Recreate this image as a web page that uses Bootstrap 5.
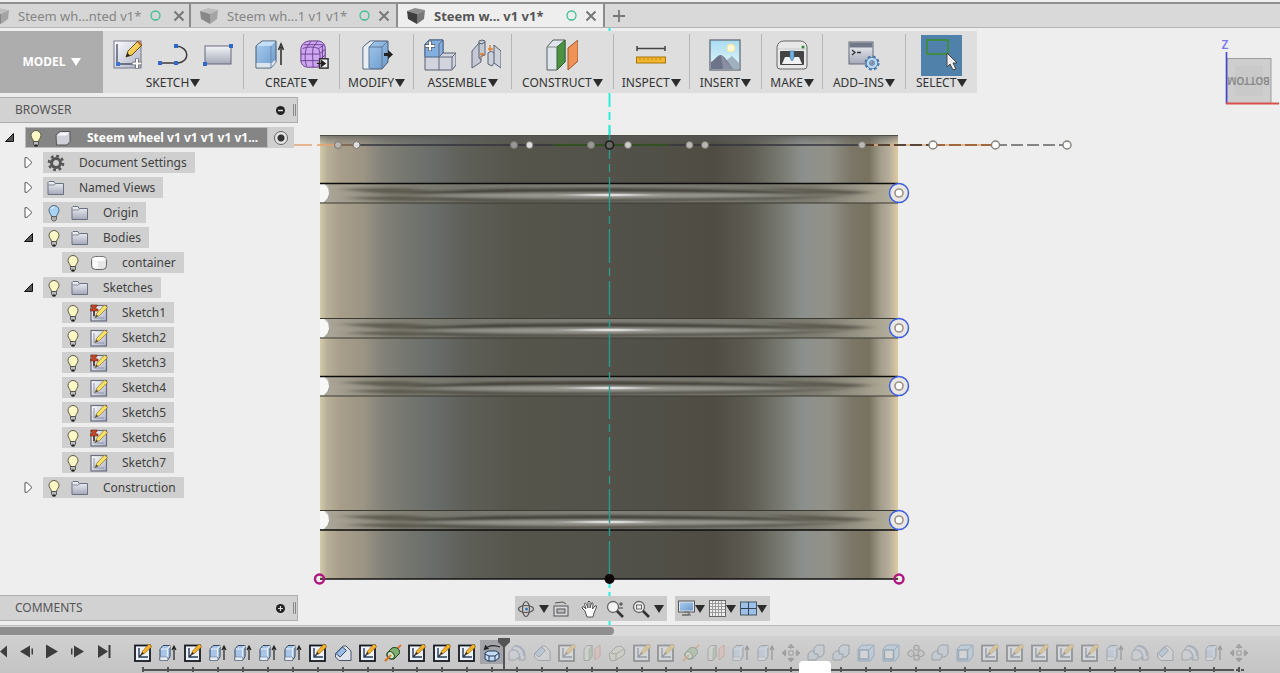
<!DOCTYPE html>
<html lang="en">
<head>
<meta charset="utf-8">
<meta name="viewport" content="width=device-width, initial-scale=1">
<title>Steem wheel v1</title>
<link href="https://cdn.jsdelivr.net/npm/bootstrap@5.3.0/dist/css/bootstrap.min.css" rel="stylesheet">
<style>
body{font-family:"Noto Sans","Open Sans",sans-serif;font-size:12px;line-height:16px;color:#3f3f3f;background:#eee}
button{font:inherit;color:inherit;border:0;background:none;padding:0}
svg{display:block;flex:none}
.doc-tabs{background:#d9d9d9;height:26px;border-top:2px solid #8f8f8f;border-bottom:1px solid #b4b4b4;margin-top:2px;overflow:hidden}
.doc-tab{width:207px;border-right:2px solid #8c8c8c;color:#858585;font-size:13px;background:#d6d6d6}
.doc-tab:first-child{width:191px}
.doc-tab.current{background:#eee;color:#555;font-weight:700}
.doc-tab .doc-name{width:128px}
.doc-tab:first-child .doc-name{width:132px}
.stage{min-height:400px}
.scene{inset:0}
.tool-row{margin-top:3px;height:62px;background:#dedede;width:max-content}
.model-btn{width:103px;background:#adadad;color:#fff;font-weight:700}
.tool-group{padding:6px 10px 0;position:relative}
.tool-group.tight{padding-left:8px;padding-right:8px}
.tool-group+.tool-group{border-left:1px solid #b9b9b9;border-image:linear-gradient(transparent 4px,#b5b5b5 4px,#b5b5b5 57px,transparent 57px) 1}
.tool-icons{gap:15px;height:36px}
.pick{background:#4f81ab;width:41px;height:41px;margin-top:-2px}
.tool-label{color:#333;line-height:20px}
.arrow-dn{display:inline-block;border:5px solid transparent;border-top:8px solid #2c2c2c;border-bottom:0;margin-left:1px}
.white-arrow{border-top-color:#fff;margin-left:5px}
.side-panel{width:298px;height:26px;background:#d2d2d2;border:1px solid #aeaeae;border-left:0;padding:0 1px 0 15px;color:#555}
.grip{width:3px;height:12px;border:1px solid #888;border-width:0 1px}
.tree{list-style:none;margin:4px 0 0;padding:0}
.tree li{height:25px}
.tree-item{height:21px;background:#cfcfcf;padding:0 8px 0 4px}
.twist{width:43px;height:21px;padding-left:24px}
.root-twist{width:25px;height:21px;padding-left:5px}
.leaf-in{width:62px}
.g-a{gap:10px}
.root-item{background:#858585;color:#fff;font-weight:700;width:243px;border:1px solid #bbb;padding:0 3px}
.root-radio{width:26px;height:21px;background:#cfcfcf}
.root-radio input{appearance:none;width:14px;height:14px;border-radius:50%;border:1px solid #666;margin:0;background:radial-gradient(circle,#333 0 3px,#e4e4e4 4px)}
.nav-strip{height:25px;background:#cbcbcb;padding:0 3px}
.low-row{display:grid;grid-template-columns:298px 1fr 294px;margin-bottom:4px}
.nav-strip .arrow-dn{margin:0}
.h-scroll{height:11px;background:#dadada;border-top:1px solid #bcbcbc;padding-top:1px}
.h-thumb{width:48%;height:8px;background:#8e8e8e;border-radius:0 4px 4px 0}
.time-row{height:37px;background:linear-gradient(#d0d0d0,#c4c4c4)}
.play-keys{width:131px}
.track{margin-right:28px;padding-top:4px}
.step{flex:1 1 0;height:29px}
.step svg{margin:4px auto 0}
.step::after{content:"";display:block;width:2px;height:5px;background:#555;margin:5px auto 0}
.step.later svg{opacity:.3}
.step.now{background:linear-gradient(#a3a4a8 24px,transparent 24px)}
.rail{left:12px;right:8px;bottom:2px;height:2px;background:linear-gradient(90deg,#555 calc(100% - 10px),transparent calc(100% - 10px),transparent calc(100% - 8px),#555 calc(100% - 8px),#555 calc(100% - 5px),transparent calc(100% - 5px),transparent calc(100% - 3px),#555 calc(100% - 3px))}
.marker{left:33.3%;margin-left:-7px;top:2px}
.note-tab{left:59.6%;bottom:0;width:32px;height:12px;background:#fff;border-radius:4px 4px 0 0}
</style>
</head>
<body class="d-flex flex-column min-vh-100 overflow-hidden">

<svg width="0" height="0" class="position-absolute" aria-hidden="true">
<defs>
<linearGradient id="gFold" x2="0" y2="1"><stop stop-color="#f4f5f9"/><stop offset="1" stop-color="#a4a8b8"/></linearGradient>
<linearGradient id="gDiag" x2="1" y2="1"><stop stop-color="#fff"/><stop offset="1" stop-color="#aab0c6"/></linearGradient>
<linearGradient id="gBlue" x2="1" y2="1"><stop stop-color="#a9cdf0"/><stop offset="1" stop-color="#6c9acb"/></linearGradient>
<linearGradient id="gPen" x2="1" y2="1"><stop stop-color="#fff29a"/><stop offset="1" stop-color="#e9a91c"/></linearGradient>
<linearGradient id="gSky" x2="0" y2="1"><stop stop-color="#a8dcf2"/><stop offset="1" stop-color="#e6f7fb"/></linearGradient>
<symbol id="bulb" viewBox="0 0 14 18"><path d="M7 1.500a5 5 0 0 1 5 5c0 2-2 3.500-2.500 6h-5C4 10 2 8.500 2 6.500a5 5 0 0 1 5-5z" fill="#fdf8c4" stroke="#5d5a40"/><path d="M4.500 5a3 3 0 0 1 2.500-2" stroke="#fff" fill="none"/><path d="M4.500 12.500h5v3l-1.500 1.500h-2l-1.500-1.500z" fill="#bbb" stroke="#444" stroke-width=".8"/><path d="M5.500 16.500h3" stroke="#222" stroke-width="2"/></symbol>
<symbol id="bulbB" viewBox="0 0 14 18"><path d="M7 1.500a5 5 0 0 1 5 5c0 2-2 3.500-2.500 6h-5C4 10 2 8.500 2 6.500a5 5 0 0 1 5-5z" fill="#a9d2f3" stroke="#4d6884"/><path d="M4.500 5a3 3 0 0 1 2.500-2" stroke="#fff" fill="none"/><path d="M4.500 12.500h5v3l-1.500 1.500h-2l-1.500-1.500z" fill="#aaa" stroke="#555" stroke-width=".8"/></symbol>
<symbol id="folder" viewBox="0 0 18 16"><path d="M1 14.500v-12l1-1h5l1 2h8.500v11z" fill="url(#gFold)" stroke="#697080"/><path d="M1.500 5h6l1-1.500" stroke="#858b99" fill="none"/></symbol>
<symbol id="gear" viewBox="0 0 18 18"><circle cx="9" cy="9" r="4.500" fill="none" stroke="#555" stroke-width="3"/><circle cx="9" cy="9" r="7" fill="none" stroke="#555" stroke-width="2.600" stroke-dasharray="2.800 2.700"/></symbol>
<symbol id="cyl" viewBox="0 0 18 16"><rect x="1.500" y="1.500" width="15" height="13" rx="4" fill="#e6e6e6" stroke="#666"/><ellipse cx="9" cy="4" rx="7" ry="2.200" fill="#fff"/><path d="M3 6v7h5v-6z" fill="#fafafa"/></symbol>
<symbol id="cube" viewBox="0 0 16 16"><path d="M1 5l4-3.500h10v10l-3 3.500H1.500z" fill="#cfd0da" stroke="#555"/><path d="M2 5.500l3.500-3h8.500l-2.500 3z" fill="#f5f5fa"/></symbol>
<symbol id="skS" viewBox="0 0 18 18"><rect x="1" y="1.500" width="15.500" height="15.500" fill="url(#gDiag)" stroke="#686c7c" stroke-width="1.200"/><path d="M4 4v10h10" fill="none" stroke="#8d93ac"/><path d="M5 13.500l2-4.500L14.500 1 17.500 3.500 9.500 11.500z" fill="#fbe163" stroke="#8d7428" stroke-width=".7"/><path d="M5 13.500l1.500-3 1.500 1.700z" fill="#444"/></symbol>
<symbol id="pin" viewBox="0 0 18 18"><use href="#skS"/><path d="M1 1h6v1.500H6V5h2v2H0V5h2V2.500H1z" fill="#c24a28" stroke="#73230e" stroke-width=".6"/><path d="M4 7v5" stroke="#3a2020" stroke-width="1.500"/></symbol>
<symbol id="sketch" viewBox="0 0 18 18"><rect x="1" y="1.500" width="15" height="15.500" fill="#edf2fc" stroke="#151a22" stroke-width="1.800"/><path d="M5 4v9h9M5 13l3-3" fill="none" stroke="#263b58" stroke-width="1.400"/><path d="M7 11l1.500-4L15 0l3 2.500-7.500 7z" fill="#f3b329" stroke="#8d5b12" stroke-width=".6"/><path d="M7 11l1.200-3 1.700 1.500z" fill="#222"/></symbol>
<symbol id="extrude" viewBox="0 0 18 18"><path d="M1 5l3-3.500h7v11L8.500 16.500H1z" fill="#a8c5e8" stroke="#33465e"/><path d="M1.500 5h7l2.500-3M8.500 5v11" fill="none" stroke="#e4effa" stroke-width="1.200"/><path d="M1 13h7.500V16.500H1z" fill="#e9edf3" stroke="#56677e" stroke-width=".5"/><path d="M15 16V3M13 6l2-4 2 4" fill="none" stroke="#222" stroke-width="1.200"/></symbol>
<symbol id="chamfer" viewBox="0 0 18 18"><path d="M1.500 9.500L9 2h3l5 5v9.500H5L1.500 13z" fill="#e0e3ea" stroke="#46536b"/><path d="M2 9.500L8.500 3l4 3.500L6 13z" fill="#9cbde8" stroke="#3b506d"/></symbol>
<symbol id="fillet" viewBox="0 0 18 18"><path d="M1 9L6 2c6-1 10 2 11 8v6h-6v-3L7 16H1z" fill="#cfd6e2" stroke="#4b5261"/><path d="M4 6c5-1 8 3 8 9M7 2c6 0 9 5 9 10" fill="none" stroke="#4b6c9c" stroke-width="1.400"/></symbol>
<symbol id="revolve" viewBox="0 0 18 18"><path d="M1 17L17 1" stroke="#e0762e" stroke-width="1.800"/><path d="M3 9l5-5c5-2 9 2 7 6l-5 5c-5 1-8-2-7-6z" fill="#7eb06f" stroke="#24421f"/><ellipse cx="6.800" cy="11.200" rx="3" ry="4" transform="rotate(-45 6.800 11.200)" fill="#d4e8cb" stroke="#28502a"/><path d="M1 17l6-6" stroke="#e0762e" stroke-width="1.800"/></symbol>
<symbol id="rbox" viewBox="0 0 18 18"><path d="M1 10l7-7 5-1 4 4-1 5-8 5-5 1z" fill="#d5d8bd" stroke="#555"/><path d="M3 9l5 1v6M8 10l8-5" stroke="#555" fill="none"/></symbol>
<symbol id="plane" viewBox="0 0 18 18"><path d="M1 5l3-3.500h5v11L6 16.500H1z" fill="#d4e4d2" stroke="#555"/><path d="M6 5l3-3.500v11L6 16z" fill="#8ab784" stroke="#555" stroke-width=".6"/><path d="M12 5l5-4v11l-5 4z" fill="#f0b3a4" stroke="#b06050"/></symbol>
<symbol id="move" viewBox="0 0 18 18"><rect x="7" y="7" width="4" height="4" fill="#ddd" stroke="#333"/><path d="M9 0l3 3.500H6zM9 18l3-3.500H6zM0 9l3.500-3v6zM18 9l-3.500-3v6zM9 3v2M9 13v2M3 9h2M13 9h2" fill="#444" stroke="#444"/></symbol>
<symbol id="combine" viewBox="0 0 18 18"><path d="M1 10l3-3h3V4l3-3h7v9l-3 3h-3l-2 3H1z" fill="#b9cce2" stroke="#34445c"/><path d="M7 7v3h4v3" fill="none" stroke="#34445c"/></symbol>
<symbol id="shell" viewBox="0 0 18 18"><path d="M1 5l4-4h12v11l-4 5H1z" fill="#a8cbea" stroke="#285f94"/><rect x="2.500" y="6" width="9" height="9" fill="#eee" stroke="#285f94" stroke-width="1.500"/><path d="M12 6l4-4" stroke="#285f94"/></symbol>
<symbol id="pattern" viewBox="0 0 18 18"><path d="M9 1l3 1v4H7V2zM4 6l3 2v3L4 13 1 11V8zM14 6l3 2v3l-3 2-3-2V8zM9 11l3 1v4H7v-4z" fill="#b8bcc5" stroke="#333"/></symbol>
<symbol id="loop" viewBox="0 0 18 18"><path d="M2 9l3-2h8l3 2v5l-4 3H5l-3-2z" fill="#c4dcf4" stroke="#243b5b"/><path d="M2 10l4 2h6l4-3M6 12v5M12 12v5" fill="none" stroke="#243b5b"/><path d="M2 5c4-4 10-4 15-2M1.500 5.500l1-3.500 2.500 2.500z" fill="none" stroke="#222" stroke-width="1.200"/></symbol>
<symbol id="tcube" viewBox="0 0 20 18"><path d="M1 4l8-3 10 2-8 4z" fill="#bdbdbd"/><path d="M1 4l10 3v10L2 12z" fill="#888"/><path d="M11 7l8-4-1 9-7 5z" fill="#a4a4a4"/></symbol>
<symbol id="tcubeD" viewBox="0 0 20 18"><path d="M1 4l8-3 10 2-8 4z" fill="#8d8d8d"/><path d="M1 4l10 3v10L2 12z" fill="#3e3e3e"/><path d="M11 7l8-4-1 9-7 5z" fill="#777"/></symbol>
<symbol id="cross" viewBox="0 0 12 12"><path d="M1.500 1.500l9 9M10.500 1.500l-9 9" stroke="#777" stroke-width="2"/></symbol>
</defs>
</svg>

<nav class="doc-tabs d-flex flex-shrink-0" aria-label="Documents">
  <div class="doc-tab d-flex align-items-center flex-shrink-0"><svg class="ms-n2" width="10" height="18" viewBox="10 0 10 18" aria-hidden="true"><use href="#tcube" width="20" height="18"/></svg><a href="#" class="doc-name text-reset text-decoration-none ps-2 ms-0 text-nowrap">Steem wh...nted v1*</a><svg class="ms-2 me-2" width="11" height="11" viewBox="0 0 11 11"><circle cx="5.500" cy="5.500" r="4.500" fill="none" stroke="#3fbf90" stroke-width="1.300"/></svg><button class="ms-1" aria-label="Close"><svg width="12" height="12"><use href="#cross"/></svg></button></div>
  <div class="doc-tab d-flex align-items-center flex-shrink-0"><svg class="ms-2" width="20" height="18"><use href="#tcube"/></svg><a href="#" class="doc-name text-reset text-decoration-none ms-2 text-nowrap">Steem wh...1 v1 v1*</a><svg class="ms-1 me-2" width="11" height="11" viewBox="0 0 11 11"><circle cx="5.500" cy="5.500" r="4.500" fill="none" stroke="#3fbf90" stroke-width="1.300"/></svg><button aria-label="Close"><svg width="12" height="12"><use href="#cross"/></svg></button></div>
  <div class="doc-tab current d-flex align-items-center flex-shrink-0"><svg class="ms-2" width="20" height="18"><use href="#tcubeD"/></svg><a href="#" class="doc-name text-reset text-decoration-none ms-2 text-nowrap">Steem w... v1 v1*</a><svg class="ms-1 me-2" width="11" height="11" viewBox="0 0 11 11"><circle cx="5.500" cy="5.500" r="4.500" fill="none" stroke="#3fbf90" stroke-width="1.300"/></svg><button aria-label="Close"><svg width="12" height="12"><use href="#cross"/></svg></button></div>
  <button class="ms-2" aria-label="New tab"><svg width="12" height="12" viewBox="0 0 12 12"><path d="M6 0v12M0 6h12" stroke="#777" stroke-width="1.800"/></svg></button>
</nav>

<main class="stage position-relative flex-grow-1 d-flex flex-column">
  <svg class="scene position-absolute w-100 h-100" viewBox="0 28 1280 597" role="img" aria-label="Cylindrical container, bottom view">
    <defs>
      <linearGradient id="body" gradientUnits="userSpaceOnUse" x1="320" x2="898" y1="0" y2="0">
        <stop offset="0" stop-color="#d2cbaa"/><stop offset=".012" stop-color="#b9b098"/><stop offset=".035" stop-color="#a89e8b"/><stop offset=".075" stop-color="#9c9484"/><stop offset=".105" stop-color="#85837a"/><stop offset=".15" stop-color="#74766f"/><stop offset=".2" stop-color="#686c69"/><stop offset=".25" stop-color="#5e5f58"/><stop offset=".34" stop-color="#56554c"/><stop offset=".5" stop-color="#52524a"/><stop offset=".68" stop-color="#4f4c43"/><stop offset=".74" stop-color="#5c5a51"/><stop offset=".79" stop-color="#74756c"/><stop offset=".835" stop-color="#8c908c"/><stop offset=".88" stop-color="#929188"/><stop offset=".92" stop-color="#7b7667"/><stop offset=".95" stop-color="#78725f"/><stop offset=".97" stop-color="#a39d8c"/><stop offset=".985" stop-color="#b7ae9b"/><stop offset="1" stop-color="#dfcba2"/>
      </linearGradient>
      <linearGradient id="topLip" x2="0" y2="1"><stop stop-color="#555" stop-opacity=".65"/><stop offset="1" stop-color="#666" stop-opacity="0"/></linearGradient>
      <linearGradient id="gr" x2="1"><stop stop-color="#b0aa9b"/><stop offset=".05" stop-color="#a09b8d"/><stop offset=".12" stop-color="#838075"/><stop offset=".25" stop-color="#75756d"/><stop offset=".5" stop-color="#7f7f78"/><stop offset=".75" stop-color="#74746b"/><stop offset=".86" stop-color="#807e73"/><stop offset=".93" stop-color="#989485"/><stop offset="1" stop-color="#bab39f"/></linearGradient>
      <radialGradient id="shine"><stop stop-color="#fff"/><stop offset=".4" stop-color="#ddd" stop-opacity=".8"/><stop offset="1" stop-color="#bbb" stop-opacity="0"/></radialGradient>
      <filter id="soft" x="-5%" y="-30%" width="110%" height="160%"><feGaussianBlur stdDeviation="8 .9"/></filter>
      <clipPath id="gc"><rect x="320" y="0" width="578" height="20"/></clipPath>
      <g id="groove">
        <rect x="320" width="578" height="20" fill="url(#gr)"/>
        <g clip-path="url(#gc)"><g filter="url(#soft)">
          <path d="M340 6L400 5L440 8L390 11z" fill="#5d5b50"/>
          <path d="M345 15L400 13L480 17L400 18z" fill="#5d5b50"/>
          <path d="M400 11Q480 4.500 609 5T830 11Q740 9.500 609 9.500T400 11z" fill="#45433b"/>
          <path d="M760 5Q820 5 870 9Q850 13 820 10z" fill="#5b584e"/>
          <path d="M420 12.500Q510 9.500 609 9.500T800 12.500Q710 15 609 15T420 12.500z" fill="#96968f"/>
          <path d="M430 14Q520 17 609 16T790 14Q840 13 860 12Q800 17 609 19T430 14z" fill="#55534a"/>
        </g></g>
        <ellipse cx="609" cy="12" rx="60" ry="2" fill="url(#shine)"/>
        <path d="M320 .500h5q5 4 4.500 9.500T324 19.500h-4z" fill="#f7f7f5"/><path d="M325 1q5 4 4.500 9.500T324 19.500" fill="none" stroke="#8d897c" stroke-width=".7"/>
      </g>
      <g id="ring"><circle r="9.500" fill="#eae7e2" stroke="#3a5fe0" stroke-width="1.500"/><circle r="4" fill="#fff" stroke="#9b938a" stroke-width="1.600"/></g>
    </defs>
    <rect x="320" y="135" width="578" height="444" fill="url(#body)"/>
    <rect x="320" y="135" width="578" height="10" fill="url(#topLip)"/>
    <path d="M320 135.500h578" stroke="#4e4d46"/>
    <use href="#groove" y="183"/><use href="#groove" y="318"/><use href="#groove" y="376"/><use href="#groove" y="510"/>
    <path d="M320 183.500h578M320 376.500h578M320 530h578" stroke="#0c0c0c" stroke-width="1.300"/>
    <path d="M320 203h578M320 318.500h578M320 338h578M320 396h578M320 510.500h578" stroke="#3b3a33"/>
    <path d="M320 579h578" stroke="#111" stroke-width="1.600"/>
    <path d="M609.500 21V125" stroke="#2beedd" stroke-width="2" stroke-dasharray="34 5 8 5"/>
    <path d="M609.500 125V579" stroke="#279b8c" stroke-width="1.400" stroke-dasharray="34 5 8 5"/>
    <path d="M609.500 125V135M609.500 582v6M609.500 592v33" stroke="#2beedd" stroke-width="2"/>
    <path d="M293 145h45" stroke="#e3a26c" stroke-width="1.500" stroke-dasharray="19 5"/>
    <path d="M338 145h18" stroke="#795b49" stroke-width="1.500"/>
    <path d="M356 145h506" stroke="#33333c" stroke-width="1.300"/>
    <path d="M553 145h116" stroke="#32581d" stroke-width="1.500"/>
    <path d="M862 145h133" stroke="#e0a878" stroke-width="1.500"/>
    <path d="M862 145h71" stroke="#27221d" stroke-width="1.500" stroke-dasharray="12 4"/>
    <path d="M933 145h62" stroke="#a3683f" stroke-width="1.800" stroke-dasharray="12 4"/>
    <path d="M995 145h72" stroke="#858585" stroke-width="1.800" stroke-dasharray="12 4"/>
    <g fill="#b9b8b2" stroke="#77736d"><circle cx="338" cy="145" r="3.500"/><circle cx="356.500" cy="145" r="3.500" fill="#ddd"/><circle cx="514" cy="145" r="3.500" fill="#999"/><circle cx="529.500" cy="145" r="3.500" fill="#ddd"/><circle cx="591" cy="145" r="3.500" fill="#999"/><circle cx="628" cy="145" r="3.500" fill="#ccc"/><circle cx="689.500" cy="145" r="3.500"/><circle cx="705" cy="145" r="3.500"/><circle cx="862" cy="145" r="3.500"/></g>
    <g fill="#fff" stroke="#85817d" stroke-width="1.400"><circle cx="933" cy="145" r="4"/><circle cx="995.500" cy="145" r="4"/><circle cx="1067" cy="145" r="4"/></g>
    <circle cx="609.500" cy="145" r="4" fill="#666660" stroke="#1d1d1d" stroke-width="1.600"/>
    <use href="#ring" x="899" y="193"/><use href="#ring" x="899" y="328"/><use href="#ring" x="899" y="386"/><use href="#ring" x="899" y="520"/>
    <circle cx="319.500" cy="579" r="4.500" fill="none" stroke="#b0147f" stroke-width="2.400"/><circle cx="899" cy="579" r="4.500" fill="none" stroke="#b0147f" stroke-width="2.400"/>
    <circle cx="609.500" cy="579" r="5" fill="#0c0608"/>
  </svg>

  <svg class="position-absolute top-0 end-0 mt-2" width="60" height="76" viewBox="1220 36 60 76" role="img" aria-label="View cube, bottom">
    <rect x="1227" y="58.500" width="44" height="45" fill="#cecece" stroke="#9d9d9d"/><rect x="1235" y="66" width="28" height="30" fill="#c9c9c9"/>
    <text x="1225" y="49" text-anchor="middle" font-size="12" font-weight="600" fill="#7a7aee">Z</text>
    <text transform="rotate(180 1248.500 81)" x="1248.500" y="85" text-anchor="middle" font-size="10" font-weight="600" fill="#878787">BOTTOM</text>
    <path d="M1226.500 52v52" stroke="#4444d4" stroke-width="1.600"/><path d="M1226 103.500h53" stroke="#d8504c" stroke-width="1.800"/>
  </svg>

  <div class="tool-row position-relative d-flex" role="toolbar">
    <button class="model-btn">MODEL<span class="arrow-dn white-arrow"></span></button>
    <div class="tool-group d-flex flex-column align-items-center">
      <div class="tool-icons d-flex align-items-center">
        <svg width="30" height="30" viewBox="0 0 30 30"><rect x="1" y="1" width="27" height="27" fill="url(#gDiag)" stroke="#77798a"/><path d="M4 4v20h20M4 24" fill="none" stroke="#4c5468" stroke-width="1.400"/><rect x="3" y="22" width="4" height="4" fill="#3b74d0"/><path d="M13 17l2-6L25 1l4 4-10 10z" fill="url(#gPen)" stroke="#6c5012"/><path d="M24 2l2-1 3 3-1.500 2z" fill="#b86d39"/><path d="M13 17l1.500-4 2.500 2.500z" fill="#222"/><path d="M24 18.500v10M19 23.500h10" stroke="#666" stroke-width="3.600"/><path d="M24 19v9M19.500 23.500h9" stroke="#fff" stroke-width="2"/></svg>
        <svg width="30" height="30" viewBox="0 0 30 30"><path d="M2 23h18c12-1 12-16-2-17" fill="none" stroke="#3d3d3d" stroke-width="1.500"/><g fill="#2e68c9"><rect y="21" width="4" height="4"/><rect x="16" y="21" width="4" height="4"/><rect x="16" y="4" width="4" height="4"/></g></svg>
        <svg width="30" height="30" viewBox="0 0 30 30"><rect x="2" y="6" width="26" height="18" fill="url(#gFold)" stroke="#66697a"/><g fill="#2e68c9"><rect y="22" width="4" height="4"/><rect x="26" y="4" width="4" height="4"/></g></svg>
      </div><button class="tool-label text-nowrap">SKETCH<span class="arrow-dn"></span></button></div>
    <div class="tool-group d-flex flex-column align-items-center">
      <div class="tool-icons d-flex align-items-center">
        <svg width="30" height="32" viewBox="0 0 30 32"><path d="M2 7l6-5h14v21l-5 6H2z" fill="url(#gBlue)" stroke="#49596d"/><path d="M2.500 7l6-4.500h13l-4.500 4.500z" fill="#c3dff6"/><path d="M2.500 24h15l4-3v2.500l-4.500 5H2.500z" fill="#dde4ea"/><path d="M17 7v22" stroke="#6d8cae"/><path d="M27 26V8M24.500 11L27 5l2.500 6" fill="none" stroke="#333" stroke-width="1.600"/></svg>
        <svg width="30" height="32" viewBox="0 0 32 32"><path d="M2 10c0-5 4-9 10-9h8c5 0 8 4 8 8v10c0 6-3 10-9 10h-9c-6 0-8-4-8-8z" fill="#cfa6f0" stroke="#5b3284"/><path d="M4 9c5-2 11-2 17 0 2 6 2 13 0 19M8 8c-2 6-2 14 0 20M15 8c-1 6 0 14 0 21M2 15h19l7-5M2 22h19l7-6M21 9l6-4M8 8l5-7M15 8l5-7M5 5h20M25 5v21" fill="none" stroke="#6b4094"/><rect x="22" y="20" width="9" height="10" fill="#eee" stroke="#333" stroke-width="1.600"/><path d="M19 25h7M24 22l4 3-4 3z" stroke="#222" fill="#222" stroke-width="1.300"/></svg>
      </div><button class="tool-label text-nowrap">CREATE<span class="arrow-dn"></span></button></div>
    <div class="tool-group tight d-flex flex-column align-items-center">
      <div class="tool-icons d-flex align-items-center">
        <svg width="32" height="32" viewBox="0 0 32 32"><path d="M2 8l7-6h18v21l-6 7H2z" fill="url(#gBlue)" stroke="#49596d"/><path d="M2.500 8l7-5.500h4L8 8v21.500H2.500z" fill="#e9edf2"/><path d="M8 8v21M8 8h13l6-6M21 8v21M8 8l6-6" stroke="#5c7999" fill="none"/><path d="M23 14h4v-3l5 4.500-5 4.500v-3h-4z" fill="#222"/></svg>
      </div><button class="tool-label text-nowrap">MODIFY<span class="arrow-dn"></span></button></div>
    <div class="tool-group d-flex flex-column align-items-center">
      <div class="tool-icons d-flex align-items-center">
        <svg width="32" height="32" viewBox="0 0 32 32"><path d="M1 5l4-4h14v13h13v12l-4 5H1z" fill="#d2d4dd" stroke="#555d70"/><path d="M1 5l4-4h14v13l-4 4H1z" fill="#83afe0" stroke="#496486"/><path d="M15 18v13M15 18h13l4-4M28 18v12M15 18l4-4M15 5v13M15 5l4-4" fill="none" stroke="#606980"/><path d="M6 2v10M1 7h10" stroke="#555" stroke-width="3.600"/><path d="M6 2.500v9M1.500 7h9" stroke="#fff" stroke-width="2.200"/></svg>
        <svg width="30" height="32" viewBox="0 0 30 32"><path d="M1 12l7-8V2l3-1 3 1v14l-4 1v6L1 29z" fill="#c4c9d3" stroke="#596073"/><path d="M8 4v15l2 2M8 4l3 1 3-2" fill="none" stroke="#596073"/><path d="M30 29V12l-7-6v8l-3-2-3 2v11l4 2 2-3z" fill="#ccd1da" stroke="#596073"/><path d="M23 14v10" stroke="#596073"/><path d="M11 14v4M19 6v6M17 10h5M9 15h4" stroke="#e08030" stroke-width="1.400"/></svg>
      </div><button class="tool-label text-nowrap">ASSEMBLE<span class="arrow-dn"></span></button></div>
    <div class="tool-group d-flex flex-column align-items-center">
      <div class="tool-icons d-flex align-items-center">
        <svg width="32" height="32" viewBox="0 0 32 32"><path d="M1 8l6-7h12v22l-8 8H1z" fill="#dfe5ea" stroke="#55605e"/><path d="M11 8l8-7v22l-8 8z" fill="#4c9242" stroke="#356531"/><path d="M1.500 8H11" stroke="#888"/><path d="M22 9l10-8v21l-10 9z" fill="#ef9256" stroke="#9d5227"/></svg>
      </div><button class="tool-label text-nowrap">CONSTRUCT<span class="arrow-dn"></span></button></div>
    <div class="tool-group tight d-flex flex-column align-items-center">
      <div class="tool-icons d-flex align-items-center">
        <svg width="30" height="30" viewBox="0 0 30 30"><path d="M1 8.500h28M1 6v5M29 6v5" stroke="#444" stroke-width="1.500"/><rect x=".5" y="17" width="29" height="6" fill="#f3b52a" stroke="#a8750f"/><path d="M4 18v2M8 18v2M12 18v2M16 18v2M20 18v2M24 18v2" stroke="#b98a20"/></svg>
      </div><button class="tool-label text-nowrap">INSPECT<span class="arrow-dn"></span></button></div>
    <div class="tool-group d-flex flex-column align-items-center">
      <div class="tool-icons d-flex align-items-center">
        <svg width="32" height="32" viewBox="0 0 32 32"><rect x="1" y="1" width="30" height="30" fill="url(#gSky)" stroke="#6d7580" stroke-width="1.400"/><circle cx="22" cy="9" r="4" fill="#fff8d6" stroke="#f6e3a2"/><path d="M14 24l9-7 7 7v6H14z" fill="#9fb0be"/><path d="M2 23c4-2 6-7 10-7 4 1 7 8 12 14H2z" fill="#6d7489"/><path d="M12 16c3 2 7 10 12 14H14z" fill="#8a90a3"/></svg>
      </div><button class="tool-label text-nowrap">INSERT<span class="arrow-dn"></span></button></div>
    <div class="tool-group tight d-flex flex-column align-items-center">
      <div class="tool-icons d-flex align-items-center">
        <svg width="32" height="32" viewBox="0 0 32 32"><path d="M1 8q1-6 7-6h16q6 0 7 6v19q0 3-3 3H4q-3 0-3-3z" fill="#e8e8e8" stroke="#666"/><path d="M2 10h28" stroke="#ccc"/><rect x="4" y="12" width="24" height="14" rx="1" fill="#444"/><path d="M9 18h14l3 7H6z" fill="#f1f1f4"/><path d="M14 12h4v7l-2 3-2-3z" fill="#74b2e2" stroke="#346c9c" stroke-width=".6"/><circle cx="27" cy="8" r="1.500" fill="#2b8c30"/></svg>
      </div><button class="tool-label text-nowrap">MAKE<span class="arrow-dn"></span></button></div>
    <div class="tool-group d-flex flex-column align-items-center">
      <div class="tool-icons d-flex align-items-center">
        <svg width="32" height="32" viewBox="0 0 32 32"><rect x="1" y="3" width="24" height="22" fill="url(#gFold)" stroke="#666b7b"/><rect x="1.500" y="3.500" width="23" height="5" fill="#727888"/><path d="M4 11l3 2.500L4 16M9 13.500h4" fill="none" stroke="#333" stroke-width="1.300"/><circle cx="24" cy="24" r="4" fill="none" stroke="#4a78a8" stroke-width="4"/><circle cx="24" cy="24" r="6" fill="none" stroke="#4a78a8" stroke-width="3" stroke-dasharray="2.700 2"/><circle cx="24" cy="24" r="4" fill="none" stroke="#b9d8f3" stroke-width="2.600"/></svg>
      </div><button class="tool-label text-nowrap">ADD–INS<span class="arrow-dn"></span></button></div>
    <div class="tool-group d-flex flex-column align-items-center">
      <div class="tool-icons d-flex align-items-start">
        <svg class="pick" viewBox="0 0 41 41"><rect x="6" y="5" width="21" height="14" fill="none" stroke="#3f8d3c" stroke-width="1.800"/><path d="M26 18v14l3-3 3 6 3-1-3-6h4z" fill="#f1f1f1" stroke="#444"/></svg>
      </div><button class="tool-label text-nowrap position-relative">SELECT<span class="arrow-dn"></span></button></div>
  </div>

  <aside class="position-relative mt-1">
    <div class="side-panel d-flex align-items-center"><span class="flex-grow-1">BROWSER</span><button class="me-2" aria-label="Collapse browser"><svg width="9" height="9" viewBox="0 0 9 9"><circle cx="4.500" cy="4.500" r="4.500" fill="#222"/><path d="M2 4.500h5" stroke="#ddd" stroke-width="1.500"/></svg></button><span class="grip"></span></div>
    <ul class="tree" id="tree"></ul>
  </aside>

  <div class="low-row position-relative mt-auto align-items-end">
    <div class="side-panel d-flex align-items-center"><span class="flex-grow-1">COMMENTS</span><button class="me-2" aria-label="Expand comments"><svg width="9" height="9" viewBox="0 0 9 9"><circle cx="4.500" cy="4.500" r="4.500" fill="#222"/><path d="M2 4.500h5M4.500 2v5" stroke="#ddd" stroke-width="1.200"/></svg></button><span class="grip"></span></div>
    <div class="d-flex justify-content-center gap-2">
      <div class="nav-strip d-flex align-items-center">
        <button aria-label="Orbit" class="me-1"><svg width="17" height="18" viewBox="0 0 17 18"><g fill="none" stroke="#555" stroke-width="1.200"><ellipse cx="8" cy="9" rx="7.500" ry="3.500"/><ellipse cx="8" cy="9" rx="3.500" ry="7.500"/></g><circle cx="8.500" cy="9" r="1.500" fill="#3c78b8"/></svg></button><span class="arrow-dn"></span>
        <button aria-label="Look at" class="ms-1"><svg width="16" height="16" viewBox="0 0 16 16"><path d="M2 2l8-1 3 2" fill="none" stroke="#555"/><rect x="1" y="5" width="14" height="10" fill="#d8d8de" stroke="#555"/><rect x="4" y="8" width="8" height="4" fill="#bbb" stroke="#555"/></svg></button>
        <button aria-label="Pan" class="ms-2 ps-1"><svg width="17" height="18" viewBox="0 0 17 18"><path d="M4 11L1 8q0-2 2-1l2 2L3.500 4q.5-2 2 0L7 8V2q1-2 2 0v6l1.500-5q1.500-1 1.500 1l-.5 5L14 6q2-1 1.500 1L13 13l-1 4H6z" fill="#fff" stroke="#555"/></svg></button>
        <button aria-label="Zoom" class="ms-2"><svg width="18" height="18" viewBox="0 0 18 18"><circle cx="7" cy="7" r="5.500" fill="#f5f5f5" stroke="#666" stroke-width="1.300"/><path d="M11 11l6 6" stroke="#333" stroke-width="2.600"/><path d="M13 4h4M15 2v4M13 8h4" stroke="#444"/></svg></button>
        <button aria-label="Fit" class="ms-2 me-1"><svg width="18" height="18" viewBox="0 0 18 18"><circle cx="7" cy="7" r="5.500" fill="#eee" stroke="#666" stroke-width="1.300"/><rect x="4.500" y="5" width="5" height="4" fill="none" stroke="#666"/><path d="M11 11l6 6" stroke="#333" stroke-width="2.600"/></svg></button><span class="arrow-dn"></span>
      </div>
      <div class="nav-strip d-flex align-items-center">
        <button aria-label="Display settings"><svg width="17" height="17" viewBox="0 0 17 17"><rect x=".5" y="1" width="16" height="11" fill="#e2e6ec" stroke="#555"/><rect x="2" y="2.500" width="13" height="8" fill="url(#gBlue)"/><path d="M6 12h5v3H4h9" fill="#999" stroke="#666"/></svg></button><span class="arrow-dn me-1"></span>
        <button aria-label="Grid"><svg width="17" height="17" viewBox="0 0 17 17"><rect x=".5" y=".5" width="16" height="16" fill="#eee" stroke="#666"/><path d="M3.500 1v15M6.500 1v15M9.500 1v15M12.500 1v15M1 3.500h15M1 6.500h15M1 9.500h15M1 12.500h15" stroke="#999"/></svg></button><span class="arrow-dn me-1"></span>
        <button aria-label="Viewports"><svg width="17" height="17" viewBox="0 0 17 17"><rect x=".5" y="2" width="16" height="13" fill="#9dc0e8" stroke="#456"/><path d="M8.500 2v13M1 8.500h15" stroke="#345"/></svg></button><span class="arrow-dn"></span>
      </div>
    </div>
  </div>
</main>

<div class="h-scroll flex-shrink-0"><div class="h-thumb"></div></div>
<footer class="time-row d-flex flex-shrink-0">
  <div class="play-keys flex-shrink-0 pt-2" role="group" aria-label="Playback"><svg width="120" height="16" viewBox="0 0 120 16" fill="#3d3d3d"><path d="M7 1.500v12L0 7.500zM30 1.500v12l-10-6zM31.500 4.500h1.500v6h-1.500zM46 .5v14l12-7zM71 4.500h1.500v6H71zM74 1.500v12l10-6zM98 1v13l10-6.500zM108.500 1h2v13h-2z"/></svg></div>
  <div class="track position-relative d-flex flex-grow-1" id="track">
    <div class="rail position-absolute"></div>
    <svg class="marker position-absolute" width="14" height="32" viewBox="0 0 14 32"><path d="M1 0h12v4L8 9v23H6V9L1 4z" fill="#555"/></svg>
    <div class="note-tab position-absolute"></div>
  </div>
</footer>

<script src="https://cdn.jsdelivr.net/npm/bootstrap@5.3.0/dist/js/bootstrap.bundle.min.js"></script>
<script>
const icon = (id, w, h) => `<svg width="${w}" height="${h}" aria-hidden="true"><use href="#${id}"/></svg>`;
const open = '<svg width="9" height="9" viewBox="0 0 9 9"><path d="M8.500 .500v8h-8z" fill="#555" stroke="#111"/></svg>';
const shut = '<svg width="9" height="11" viewBox="0 0 9 11"><path d="M1 .700v9.600h2L8 5.500 3 .700z" fill="#fff" stroke="#555"/></svg>';

// name, expander, bulb, icon
const rows = [
  ['Document Settings', shut, '', 'gear'], ['Named Views', shut, '', 'folder'],
  ['Origin', shut, 'bulbB', 'folder'], ['Bodies', open, 'bulb', 'folder'],
  ['container', null, 'bulb', 'cyl'], ['Sketches', open, 'bulb', 'folder'],
  ...[1, 2, 3, 4, 5, 6, 7].map(n => ['Sketch' + n, null, 'bulb', [1, 3, 6].includes(n) ? 'pin' : 'skS']),
  ['Construction', shut, 'bulb', 'folder']
];
document.getElementById('tree').innerHTML =
  `<li class="d-flex"><button class="root-twist" aria-label="Toggle">${open}</button><div class="tree-item root-item d-flex align-items-center">${icon('bulb', 14, 18)}<span class="ms-2 ps-1">${icon('cube', 16, 16)}</span><span class="ms-3 text-nowrap">Steem wheel v1 v1 v1 v1 v1...</span></div><label class="root-radio d-flex align-items-center justify-content-center"><input type="radio" checked aria-label="Activate component"></label></li>` +
  rows.map(([name, tw, bulb, ic]) => `<li class="d-flex">` +
    (tw === null ? '<span class="leaf-in"></span>' : `<button class="twist" aria-label="Toggle">${tw}</button>`) +
    `<div class="tree-item d-flex align-items-center g-a">${bulb ? icon(bulb, 14, 18) : ''}${icon(ic, 18, ic === 'folder' || ic === 'cyl' ? 16 : 18)}<span class="ms-1 text-nowrap">${name}</span></div></li>`).join('');

const steps = 'sketch extrude sketch extrude extrude extrude extrude sketch chamfer sketch revolve sketch sketch sketch loop fillet chamfer sketch plane rbox sketch sketch revolve plane extrude extrude move combine combine shell shell pattern combine shell sketch sketch sketch sketch sketch extrude fillet chamfer fillet extrude move'.split(' ');
const current = 14;
document.getElementById('track').insertAdjacentHTML('afterbegin', steps.map((s, i) =>
  `<button class="step ${i === current ? 'now' : i > current ? 'later' : ''}" aria-label="${s}">${icon(s, 18, 18)}</button>`).join(''));
</script>
</body>
</html>
